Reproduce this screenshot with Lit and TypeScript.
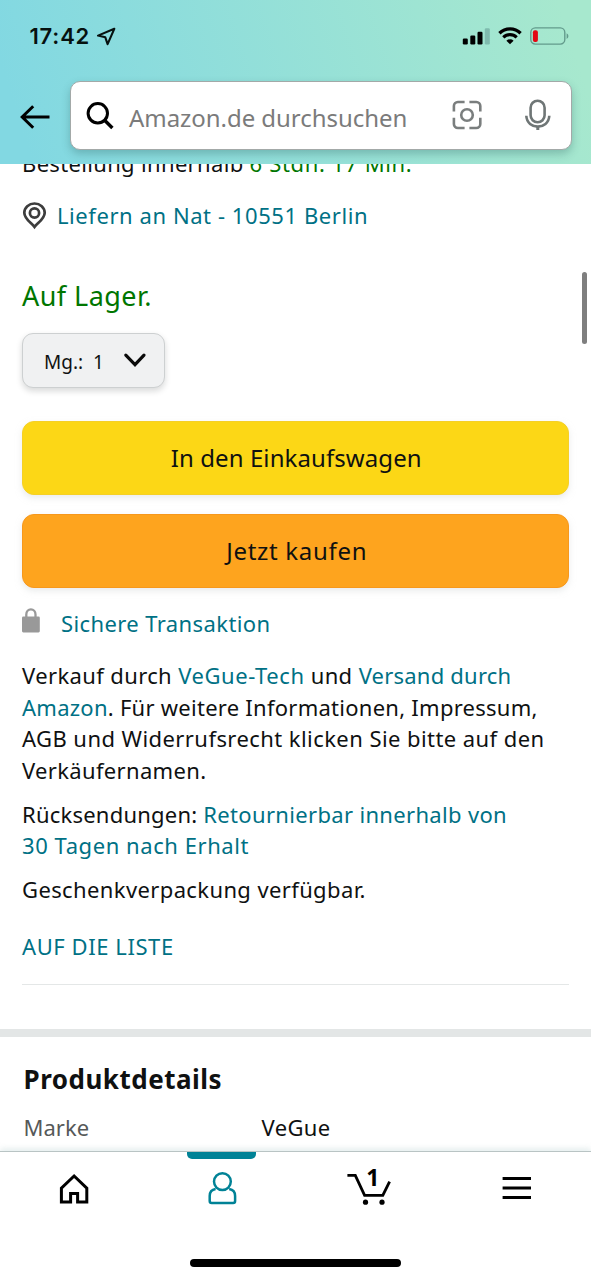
import { LitElement, html, css } from 'lit';
import { customElement } from 'lit/decorators.js';

@customElement('status-bar')
class StatusBar extends LitElement {
  static styles = css`
    :host { display: flex; height: 80px; box-sizing: border-box; padding: 23px 22px 0 29.5px; align-items: flex-start; }
    .time { font: 600 22px/27px "Inter", sans-serif; letter-spacing: 0.8px; color: #06110f; width: 66.5px; white-space: nowrap; }
    svg { display: block; }
    .loc { margin-top: 4px; }
    .signal { margin: 5px 8px 0 auto; }
    .wifi { margin: 4px 8px 0 0; }
    .battery { margin-top: 4px; }
  `;
  render() {
    return html`
      <div class="time">17:42</div>
      <svg class="loc" width="20" height="20" viewBox="0 0 20 20" fill="none" stroke="#06110f" stroke-width="2.1" stroke-linejoin="round">
        <path d="M18.3 1.8 2 8.6 9.3 10.3 11.6 17.2Z" />
      </svg>
      <svg class="signal" width="28" height="17" viewBox="0 0 28 17">
        <rect x="0.8" y="10.5" width="5" height="6" rx="1.2" />
        <rect x="8.3" y="7.5" width="5" height="9" rx="1.2" />
        <rect x="15.5" y="3.8" width="5" height="12.7" rx="1.2" />
        <rect x="22.8" y="0.2" width="5" height="16.3" rx="1.2" fill="#7fbbae" />
      </svg>
      <svg class="wifi" width="24" height="18" viewBox="0 0 24 18" fill="none" stroke="#000">
        <path d="M1.4 6.2a15.3 15.3 0 0 1 21.2 0" stroke-width="3.3" />
        <path d="M5.3 10.3a9.6 9.6 0 0 1 13.4 0" stroke-width="3.1" />
        <path d="M12 17.3 8.4 13.7a5.2 5.2 0 0 1 7.2 0Z" fill="#000" stroke="none" />
      </svg>
      <svg class="battery" width="39" height="18" viewBox="0 0 39 18">
        <rect x="0.8" y="0.9" width="34" height="16.2" rx="4.5" fill="none" stroke="#639b8c" stroke-width="1.4" />
        <rect x="2.9" y="3.3" width="5" height="11.6" rx="2" fill="#e30613" />
        <path d="M36.6 6.2a3.2 3.2 0 0 1 0 5.8Z" fill="#639b8c" />
      </svg>`;
  }
}

@customElement('search-header')
class SearchHeader extends LitElement {
  static styles = css`
    :host { display: flex; height: 84px; box-sizing: border-box; padding: .5px 19px 0 19px; align-items: flex-start; }
    svg { display: block; flex: none; }
    .back { margin-top: 23px; }
    .box { display: flex; align-items: flex-start; box-sizing: border-box; width: 503px; height: 69.5px; margin-left: 18.5px; border: 1.5px solid #a3a9a8; border-radius: 10px; background: #fff; box-shadow: 0 4px 8px rgba(40, 90, 90, .3); }
    .glass { margin: 19px 0 0 15px; }
    .placeholder { margin-left: 13.5px; font-size: 24px; line-height: 36px; margin-top: 18px; letter-spacing: -.05px; color: #7b7b7b; width: 323px; white-space: nowrap; }
    .mic { margin: 17.5px 0 0 41.5px; }
    .cam { margin-top: 18px; }
  `;
  render() {
    return html`
      <svg class="back" width="32" height="26" viewBox="0 0 32 26" fill="none" stroke="#000" stroke-width="3">
        <path d="M30.5 13H3.2M14.2 2.2 3.2 13 14.2 23.8" />
      </svg>
      <div class="box">
        <svg class="glass" width="30" height="30" viewBox="0 0 30 30" fill="none" stroke="#000" stroke-width="3">
          <circle cx="11.8" cy="12.3" r="9.7" />
          <path d="M18.6 19.3 26.4 27" stroke-width="3.4" />
        </svg>
        <div class="placeholder">Amazon.de durchsuchen</div>
        <svg class="cam" width="30" height="30" viewBox="0 0 30 30" fill="none" stroke="#7a7e7e" stroke-width="2.6">
          <path d="M1.9 11.6V6a4 4 0 0 1 4-4H12.6M17.4 2H24.3a4 4 0 0 1 4 4V11.6M28.3 17.8V24a4 4 0 0 1-4 4H17.4M12.6 28H5.9a4 4 0 0 1-4-4V17.8" />
          <circle cx="15" cy="15" r="5.8" />
        </svg>
        <svg class="mic" width="28" height="32" viewBox="0 0 28 32" fill="none" stroke="#6f7676" stroke-width="2.6">
          <rect x="6.6" y="1.7" width="14" height="21.6" rx="7" />
          <path d="M2.3 16.8C3 31.2 24.6 31.2 25.3 16.8" />
          <path d="M13.8 27v4" stroke-width="3" />
        </svg>
      </div>`;
  }
}

@customElement('product-info')
class ProductInfo extends LitElement {
  static styles = css`
    :host { display: block; flex: 1; min-height: 0; overflow: hidden; background: #fff; font-size: 22px; line-height: 31.5px; color: #0f1111; white-space: nowrap; }
    svg { display: block; flex: none; }
    .buy { padding: 0 22px; margin-top: -16.5px; }
    .link { color: #007185; }
    .green { color: #007600; }
    .k20 { letter-spacing: .22px; }
    .k30 { letter-spacing: .26px; }
    .k35 { letter-spacing: .33px; }
    .k40 { letter-spacing: .38px; }
    .k45 { letter-spacing: .43px; }
    .k60 { letter-spacing: .57px; }
    .k65 { letter-spacing: .65px; }
    .deliver { display: flex; margin-top: 20.7px; }
    .deliver svg { margin: 2.5px 10px 0 0; }
    .stock { margin-top: 46.5px; font-size: 27px; line-height: 36px; letter-spacing: .45px; }
    .qty { display: flex; box-sizing: border-box; width: 143px; height: 55px; margin-top: 19px; padding: 11px 0 0 21px; border: 1.5px solid #cdd0d1; border-radius: 11px; background: #f0f1f2; box-shadow: 0 3px 6px rgba(15, 17, 17, .16); font-size: 19px; line-height: 34px; }
    .qty .num { margin-left: 10px; width: 30px; }
    .qty svg { margin-top: 7.5px; }
    .btn { box-sizing: border-box; height: 74px; border-radius: 12px; text-align: center; font-size: 24px; line-height: 71.5px; box-shadow: 0 3px 6px rgba(213, 217, 217, .5); }
    .cart { margin-top: 33px; padding-left: 1.5px; background: #fcd716; border: 1px solid #f5d026; letter-spacing: .08px; }
    .now { margin-top: 19.5px; padding-left: 2.5px; background: #fea41e; border: 1.5px solid #f7981c; letter-spacing: .68px; }
    .secure { display: flex; margin-top: 19.7px; }
    .secure svg { margin: 0 21px 0 0; }
    .secure.link { letter-spacing: .4px; }
    .seller { margin-top: 20.8px; }
    .para { margin-top: 12.5px; }
    .list { margin-top: 25.5px; }
    .rule { height: 1.5px; margin-top: 21.2px; background: #e4e7e7; }
    .band { height: 8px; margin-top: 44px; background: #e3e6e6; }
    .details { padding: 24px 23.5px 0; }
    .details h2 { margin: 0; font-size: 26px; line-height: 36px; font-weight: 700; letter-spacing: .5px; }
    .row { display: grid; grid-template-columns: 238px 1fr; margin-top: 14.5px; }
    .row .key { color: #565959; }
  `;
  render() {
    return html`
      <div class="buy">
        <div><span class="k35">Bestellung innerhalb </span><span class="green k65">6 Stdn. 17 Min.</span></div>
        <div class="deliver link k60">
          <svg width="25" height="28" viewBox="0 0 25 28" fill="none" stroke="#3d3d3d" stroke-width="2.7">
            <path d="M12.5 24.9C9.8 21.2 2.3 17 2.3 10.7a10.2 9.2 0 0 1 20.4 0C22.7 17 15.2 21.2 12.5 24.9Z" />
            <circle cx="12.5" cy="11" r="4.6" />
          </svg>
          <span>Liefern an Nat - 10551 Berlin</span>
        </div>
        <div class="stock green">Auf Lager.</div>
        <div class="qty">
          <span>Mg.:</span><span class="num">1</span>
          <svg width="24" height="17" viewBox="0 0 24 17" fill="none" stroke="#0a0a0a" stroke-width="3.2" stroke-linecap="round">
            <path d="M2.8 3.2 12 12.6 21 3.2" />
          </svg>
        </div>
        <div class="btn cart">In den Einkaufswagen</div>
        <div class="btn now">Jetzt kaufen</div>
        <div class="secure link">
          <svg width="18" height="26" viewBox="0 0 18 26">
            <path d="M4.3 10V6.4a4.6 5 0 0 1 9.2 0V10" fill="none" stroke="#999" stroke-width="2.3" />
            <rect x="0" y="8.6" width="17.8" height="15.8" rx="1.3" fill="#999" />
          </svg>
          <span>Sichere Transaktion</span>
        </div>
        <div class="seller">
          <span class="k40">Verkauf durch </span><span class="link k60">VeGue-Tech</span><span class="k40"> und </span><span class="link k20">Versand durch</span><br />
          <span class="k30"><span class="link">Amazon</span>. Für weitere Informationen, Impressum,</span><br />
          <span class="k45">AGB und Widerrufsrecht klicken Sie bitte auf den</span><br />
          <span class="k35">Verkäufernamen.</span>
        </div>
        <div class="para">
          <span class="k20">Rücksendungen: </span><span class="link k35">Retournierbar innerhalb von</span><br />
          <span class="link k60">30 Tagen nach Erhalt</span>
        </div>
        <div class="para k40">Geschenkverpackung verfügbar.</div>
        <div class="list link k60">AUF DIE LISTE</div>
        <div class="rule"></div>
      </div>
      <div class="band"></div>
      <div class="details">
        <h2>Produktdetails</h2>
        <div class="row"><span class="key">Marke</span><span class="k40">VeGue</span></div>
      </div>`;
  }
}

@customElement('tab-bar')
class TabBar extends LitElement {
  static styles = css`
    :host { display: block; flex: none; position: relative; height: 129.5px; background: #fff; border-top: 1px solid #b9c4c4; box-sizing: border-box; box-shadow: 0 -2px 6px rgba(180, 205, 205, .4); }
    .tabs { display: grid; grid-template-columns: repeat(4, 1fr); height: 107.5px; }
    .tab { display: flex; flex-direction: column; align-items: center; }
    .mark { width: 69.5px; height: 7px; border-radius: 0 0 5px 5px; }
    .active .mark { background: #008296; }
    svg { display: block; margin-top: 1.5px; overflow: visible; }
    text { font: 700 23px "Noto Sans", sans-serif; }
    .home { width: 211px; height: 8px; margin: 0 auto; border-radius: 4px; background: #000; }
  `;
  render() {
    return html`
      <div class="tabs">
        <div class="tab"><div class="mark"></div>
          <svg width="44" height="48" viewBox="0 -8 44 48" fill="none" stroke="#000" stroke-width="3">
            <path d="M9.4 33.9V20.2L22.1 8 34.8 20.2V33.9H25.6V25.6H18.6V33.9Z" />
          </svg></div>
        <div class="tab active"><div class="mark"></div>
          <svg width="44" height="48" viewBox="0 -8 44 48" fill="none" stroke="#008296" stroke-width="2.5">
            <circle cx="22.4" cy="13.6" r="8.4" />
            <path d="M15.6 21C11.6 21.6 9.7 24.3 9.7 28V33a2 2 0 0 0 2 2H33.1a2 2 0 0 0 2-2V28C35.1 24.3 33.2 21.6 29.2 21" />
          </svg></div>
        <div class="tab"><div class="mark"></div>
          <svg width="44" height="48" viewBox="0 -8 44 48">
            <path d="M.4 7.4H8.3L17.6 27.4H35.8L42.6 13.6" fill="none" stroke="#000" stroke-width="2.8" />
            <circle cx="18.5" cy="34.2" r="2.6" /><circle cx="35" cy="34.2" r="2.6" />
            <text x="19.2" y="18">1</text>
          </svg></div>
        <div class="tab"><div class="mark"></div>
          <svg width="44" height="48" viewBox="0 -8 44 48" stroke="#000" stroke-width="3">
            <path d="M7.6 10.5H36M7.6 20H36M7.6 29.5H36" />
          </svg></div>
      </div>
      <div class="home"></div>`;
  }
}

@customElement('app-root')
class AppRoot extends LitElement {
  static styles = css`
    :host { display: flex; flex-direction: column; position: relative; width: 591px; height: 1280px; overflow: hidden; background: #fff; font-family: "Noto Sans", sans-serif; }
    header { flex: none; height: 164px; overflow: hidden; background: linear-gradient(72deg, #82d8e2 5%, #a7e8ce 95%); }
    .scroll { position: absolute; right: 4px; top: 272px; width: 5px; height: 72px; border-radius: 3px; background: #7f7f7f; }
  `;
  render() {
    return html`
      <header><status-bar></status-bar><search-header></search-header></header>
      <product-info></product-info>
      <tab-bar></tab-bar>
      <div class="scroll"></div>`;
  }
}
